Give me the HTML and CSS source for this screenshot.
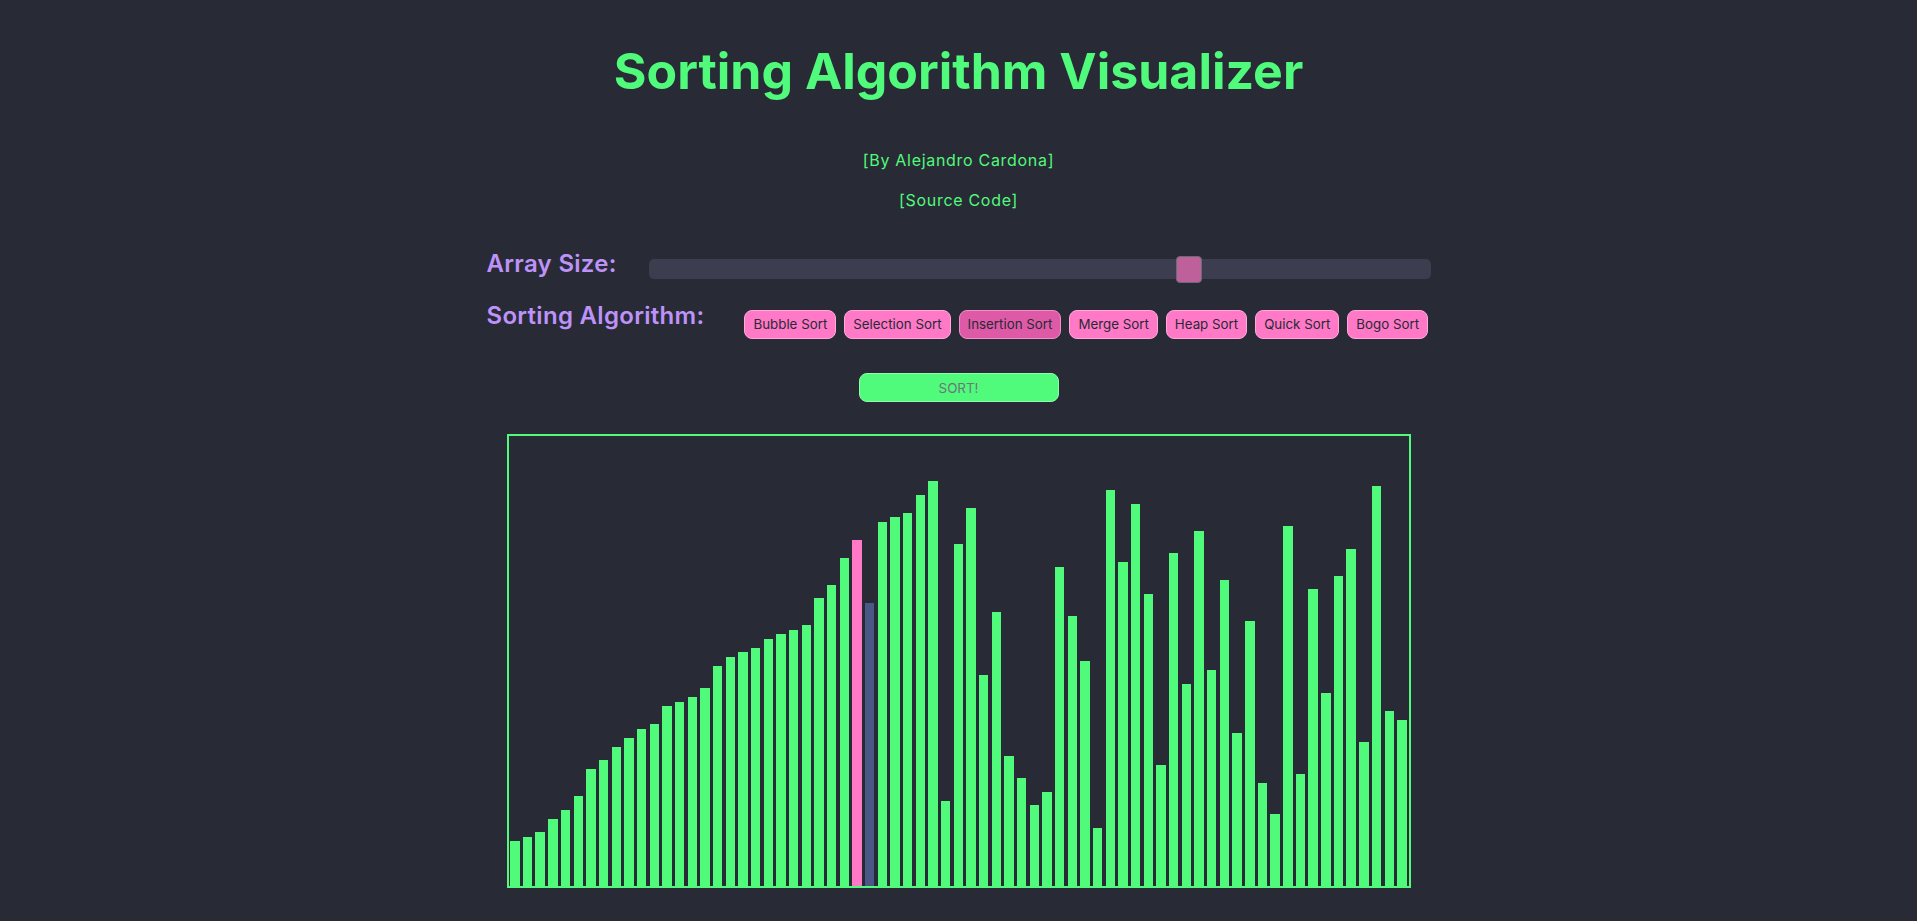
FILE: index.html
```html
<!DOCTYPE html>
<html lang="en">
<head>
<meta charset="utf-8">
<title>Sorting Algorithm Visualizer</title>
<link rel="stylesheet" href="styles.css">
</head>
<body>
<h1 class="title">Sorting Algorithm Visualizer</h1>
<p class="credit credit-author"><a href="#">[By Alejandro Cardona]</a></p>
<p class="credit credit-source"><a href="#">[Source Code]</a></p>
<div class="controls">
  <div class="row row-size">
    <label class="label" for="size">Array Size:</label>
    <input id="size" class="slider" type="range" min="4" max="100" value="71">
  </div>
  <div class="row row-algo">
    <span class="label">Sorting Algorithm:</span>
    <div class="algos">
      <button class="algo">Bubble Sort</button>
      <button class="algo">Selection Sort</button>
      <button class="algo active">Insertion Sort</button>
      <button class="algo">Merge Sort</button>
      <button class="algo">Heap Sort</button>
      <button class="algo">Quick Sort</button>
      <button class="algo">Bogo Sort</button>
    </div>
  </div>
</div>
<div class="sort-wrap"><button class="sort-btn">SORT!</button></div>
<div class="chart">
  <div class="bar" style="height:45px"></div>
  <div class="bar" style="height:49px"></div>
  <div class="bar" style="height:54px"></div>
  <div class="bar" style="height:67px"></div>
  <div class="bar" style="height:76px"></div>
  <div class="bar" style="height:90px"></div>
  <div class="bar" style="height:117px"></div>
  <div class="bar" style="height:126px"></div>
  <div class="bar" style="height:139px"></div>
  <div class="bar" style="height:148px"></div>
  <div class="bar" style="height:157px"></div>
  <div class="bar" style="height:162px"></div>
  <div class="bar" style="height:180px"></div>
  <div class="bar" style="height:184px"></div>
  <div class="bar" style="height:189px"></div>
  <div class="bar" style="height:198px"></div>
  <div class="bar" style="height:220px"></div>
  <div class="bar" style="height:229px"></div>
  <div class="bar" style="height:234px"></div>
  <div class="bar" style="height:238px"></div>
  <div class="bar" style="height:247px"></div>
  <div class="bar" style="height:252px"></div>
  <div class="bar" style="height:256px"></div>
  <div class="bar" style="height:261px"></div>
  <div class="bar" style="height:288px"></div>
  <div class="bar" style="height:301px"></div>
  <div class="bar" style="height:328px"></div>
  <div class="bar bar-key" style="height:346px"></div>
  <div class="bar bar-compare" style="height:283px"></div>
  <div class="bar" style="height:364px"></div>
  <div class="bar" style="height:369px"></div>
  <div class="bar" style="height:373px"></div>
  <div class="bar" style="height:391px"></div>
  <div class="bar" style="height:405px"></div>
  <div class="bar" style="height:85px"></div>
  <div class="bar" style="height:342px"></div>
  <div class="bar" style="height:378px"></div>
  <div class="bar" style="height:211px"></div>
  <div class="bar" style="height:274px"></div>
  <div class="bar" style="height:130px"></div>
  <div class="bar" style="height:108px"></div>
  <div class="bar" style="height:81px"></div>
  <div class="bar" style="height:94px"></div>
  <div class="bar" style="height:319px"></div>
  <div class="bar" style="height:270px"></div>
  <div class="bar" style="height:225px"></div>
  <div class="bar" style="height:58px"></div>
  <div class="bar" style="height:396px"></div>
  <div class="bar" style="height:324px"></div>
  <div class="bar" style="height:382px"></div>
  <div class="bar" style="height:292px"></div>
  <div class="bar" style="height:121px"></div>
  <div class="bar" style="height:333px"></div>
  <div class="bar" style="height:202px"></div>
  <div class="bar" style="height:355px"></div>
  <div class="bar" style="height:216px"></div>
  <div class="bar" style="height:306px"></div>
  <div class="bar" style="height:153px"></div>
  <div class="bar" style="height:265px"></div>
  <div class="bar" style="height:103px"></div>
  <div class="bar" style="height:72px"></div>
  <div class="bar" style="height:360px"></div>
  <div class="bar" style="height:112px"></div>
  <div class="bar" style="height:297px"></div>
  <div class="bar" style="height:193px"></div>
  <div class="bar" style="height:310px"></div>
  <div class="bar" style="height:337px"></div>
  <div class="bar" style="height:144px"></div>
  <div class="bar" style="height:400px"></div>
  <div class="bar" style="height:175px"></div>
  <div class="bar" style="height:166px"></div>
</div>
</body>
</html>
```

FILE: styles.css
```css
html, body {
  margin: 0;
  padding: 0;
}

body {
  background: #282a36;
  font-family: Inter, "Noto Sans", sans-serif;
  color: #50fa7b;
}

.title {
  margin: 41px 0 0;
  text-align: center;
  color: #50fa7b;
  font-size: 50px;
  line-height: 60px;
  font-weight: 700;
}

.credit {
  margin: 0;
  text-align: center;
  font-size: 16px;
  line-height: 20px;
  letter-spacing: 0.7px;
}

.credit-author {
  margin-top: 49px;
}

.credit-source {
  margin-top: 20px;
}

.credit a {
  color: #50fa7b;
  text-decoration: none;
}

.controls {
  width: 944px;
  margin: 39px auto 0;
}

.row {
  display: flex;
  align-items: flex-start;
}

.row-size {
  gap: 32px;
}

.row-algo {
  gap: 40px;
  margin-top: 22px;
}

.label {
  color: #bd93f9;
  font-size: 24px;
  font-weight: 600;
  line-height: 30px;
  letter-spacing: 0.3px;
  white-space: nowrap;
}

.slider {
  -webkit-appearance: none;
  appearance: none;
  flex: 1 1 0;
  min-width: 0;
  height: 20px;
  margin: 10px 0 0;
  padding: 0;
  background: #3c3e50;
  border-radius: 5px;
  outline: none;
}

.slider::-webkit-slider-thumb {
  -webkit-appearance: none;
  appearance: none;
  box-sizing: border-box;
  width: 26px;
  height: 27px;
  background: #be619b;
  border: 1px solid #6b6b78;
  border-radius: 4px;
}

.algos {
  display: flex;
  gap: 8px;
  margin-top: 9px;
}

.algo {
  box-sizing: border-box;
  height: 29px;
  margin: 0;
  padding: 0 8px;
  border: 1px solid #ffa8dc;
  border-radius: 8px;
  background: #ff79c6;
  color: #282a36;
  font-family: inherit;
  font-size: 13.33px;
  line-height: 27px;
  white-space: nowrap;
}

.algo.active {
  background: #df5aa6;
  border-color: #f08fc8;
}

.sort-wrap {
  display: flex;
  justify-content: center;
  margin-top: 34px;
}

.sort-btn {
  box-sizing: border-box;
  width: 200px;
  height: 29px;
  margin: 0;
  padding: 0;
  border: 1px solid #8ffcae;
  border-radius: 8px;
  background: #50fa7b;
  color: #6c757d;
  font-family: inherit;
  font-size: 13.33px;
}

.chart {
  width: 900px;
  height: 450px;
  margin: 32px auto 0;
  border: 2px solid #50fa7b;
  display: flex;
  align-items: flex-end;
}

.bar {
  flex: 1 1 0;
  margin: 0 1.65px;
  background: #50fa7b;
}

.bar-key {
  background: #ff79c6;
}

.bar-compare {
  background: #4a5888;
}
```
